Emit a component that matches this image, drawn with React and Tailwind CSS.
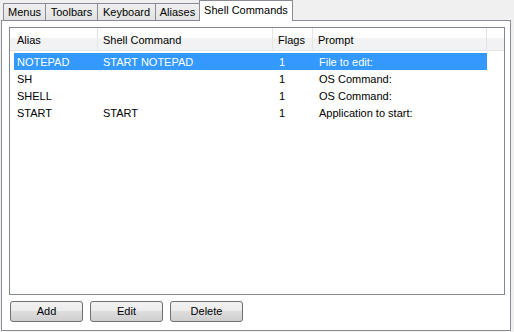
import React from 'react';

const tabs = [
  { label: 'Menus', w: 'w-[43px]' },
  { label: 'Toolbars', w: 'w-[53px]' },
  { label: 'Keyboard', w: 'w-[59px]' },
  { label: 'Aliases', w: 'w-[45px]' },
];

const rows = [
  { alias: 'NOTEPAD', cmd: 'START NOTEPAD', flags: '1', prompt: 'File to edit:', selected: true },
  { alias: 'SH', cmd: '', flags: '1', prompt: 'OS Command:' },
  { alias: 'SHELL', cmd: '', flags: '1', prompt: 'OS Command:' },
  { alias: 'START', cmd: 'START', flags: '1', prompt: 'Application to start:' },
];

const btn =
  'w-[73px] h-[21px] rounded-[3px] border border-[#707070] bg-[linear-gradient(to_bottom,#f2f2f2_0%,#ebebeb_50%,#dddddd_50%,#cfcfcf_100%)] flex items-center justify-center text-black';

const App = () => {
  return (
    <div className="w-[514px] h-[332px] bg-[#f0f0f0] font-['Liberation_Sans',Arial,sans-serif] text-[11px] text-black overflow-hidden">
      {/* Tab strip */}
      <div className="flex items-end h-[20px] pl-[3px]">
        {tabs.map((t, i) => (
          <div
            key={t.label}
            className={`${t.w} h-[17px] ${i > 0 ? '-ml-px' : ''} border-t border-l border-r border-[#898c95] bg-[linear-gradient(to_bottom,#f0f0f0,#e2e2e2)] flex items-center justify-center leading-none`}
          >
            {t.label}
          </div>
        ))}
        <div className="relative z-10 -ml-px -mb-px w-[94px] h-[21px] border-t border-l border-r border-[#898c95] bg-white flex items-center justify-center leading-none pb-[2px]">
          Shell Commands
        </div>
      </div>

      {/* Panel */}
      <div className="ml-px w-[510px] h-[311px] border border-[#898c95] bg-white flex flex-col pl-[7px] pt-[6px]">
        <div className="w-[496px] h-[268px] border border-[#828790] bg-white flex flex-col">
          {/* Header */}
          <div className="flex h-[23px] border-b border-[#e5e5e5] bg-[linear-gradient(to_bottom,#ffffff_0%,#ffffff_45%,#f3f3f4_45%,#f1f2f4_100%)]">
            <div className="w-[88px] border-r border-[#e5e5e5] pl-[7px] pt-[2px] flex items-center">Alias</div>
            <div className="w-[175px] border-r border-[#e5e5e5] pl-[5px] pt-[2px] flex items-center">Shell Command</div>
            <div className="w-[40px] border-r border-[#e5e5e5] pl-[5px] pt-[2px] flex items-center">Flags</div>
            <div className="w-[174px] border-r border-[#e5e5e5] pl-[5px] pt-[2px] flex items-center">Prompt</div>
            <div className="flex-1" />
          </div>

          {/* Rows */}
          <div className="flex flex-col mt-[2px]">
            {rows.map((r) => (
              <div
                key={r.alias}
                className={`flex h-[17px] ml-[4px] w-[473px] items-center pt-px ${r.selected ? 'bg-[#3399ff] text-white' : ''}`}
              >
                <div className="w-[84px] pl-[3px]">{r.alias}</div>
                <div className="w-[176px] pl-[5px]">{r.cmd}</div>
                <div className="w-[40px] pl-[5px]">{r.flags}</div>
                <div className="flex-1 pl-[5px]">{r.prompt}</div>
              </div>
            ))}
          </div>
        </div>

        {/* Buttons */}
        <div className="flex gap-[7px] mt-[6px] ml-px">
          <button className={btn}>Add</button>
          <button className={btn}>Edit</button>
          <button className={btn}>Delete</button>
        </div>
      </div>
    </div>
  );
};

export default App;
